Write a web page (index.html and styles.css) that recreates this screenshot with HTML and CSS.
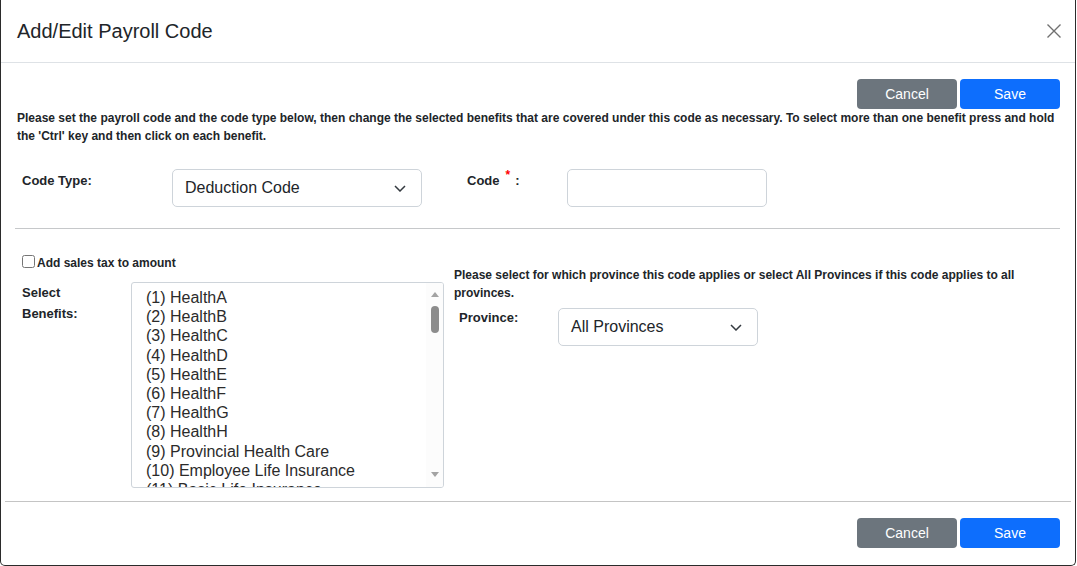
FILE: index.html
```html
<!DOCTYPE html>
<html lang="en">
<head>
<meta charset="utf-8">
<title>Add/Edit Payroll Code</title>
<link rel="stylesheet" href="styles.css">
</head>
<body>
<div class="modal">
  <header class="modal-header">
    <h1 class="modal-title">Add/Edit Payroll Code</h1>
    <button class="close" aria-label="Close">
      <svg width="14" height="14" viewBox="0 0 14 14"><path d="M0.5 0.5L13.5 13.5M13.5 0.5L0.5 13.5" stroke="#707070" stroke-width="1.4" fill="none"/></svg>
    </button>
  </header>
  <main class="modal-body">
    <div class="actions">
      <button class="btn btn-secondary">Cancel</button>
      <button class="btn btn-primary">Save</button>
    </div>
    <p class="intro">Please set the payroll code and the code type below, then change the selected benefits that are covered under this code as necessary. To select more than one benefit press and hold the 'Ctrl' key and then click on each benefit.</p>
    <div class="code-row">
      <label class="lbl lbl-type">Code Type:</label>
      <div class="select select-type">
        <span>Deduction Code</span>
        <svg class="chev" width="12" height="7" viewBox="0 0 12 7"><path d="M1 1L6 6L11 1" stroke="#343a40" stroke-width="1.5" fill="none"/></svg>
      </div>
      <label class="lbl lbl-code">Code<sup class="req">*</sup>:</label>
      <div class="input"></div>
    </div>
    <hr class="divider">
    <div class="lower">
      <div class="left">
        <label class="check"><input type="checkbox">Add sales tax to amount</label>
        <div class="benefits">
          <div class="lbl lbl-benefits">Select<br>Benefits:</div>
          <div class="listbox" role="listbox">
            <ul class="options">
              <li>(1) HealthA</li>
              <li>(2) HealthB</li>
              <li>(3) HealthC</li>
              <li>(4) HealthD</li>
              <li>(5) HealthE</li>
              <li>(6) HealthF</li>
              <li>(7) HealthG</li>
              <li>(8) HealthH</li>
              <li>(9) Provincial Health Care</li>
              <li>(10) Employee Life Insurance</li>
              <li>(11) Basic Life Insurance</li>
            </ul>
            <div class="scrollbar">
              <div class="arrow-up"><svg width="8" height="5" viewBox="0 0 8 5"><path d="M0 5L4 0L8 5Z" fill="#a3a3a3"/></svg></div>
              <div class="thumb"></div>
              <div class="track"></div>
              <div class="arrow-down"><svg width="8" height="5" viewBox="0 0 8 5"><path d="M0 0L4 5L8 0Z" fill="#a3a3a3"/></svg></div>
            </div>
          </div>
        </div>
      </div>
      <div class="right">
        <p class="note">Please select for which province this code applies or select All Provinces if this code applies to all provinces.</p>
        <div class="province-row">
          <label class="lbl lbl-province">Province:</label>
          <div class="select select-province">
            <span>All Provinces</span>
            <svg class="chev" width="12" height="7" viewBox="0 0 12 7"><path d="M1 1L6 6L11 1" stroke="#343a40" stroke-width="1.5" fill="none"/></svg>
          </div>
        </div>
      </div>
    </div>
  </main>
  <footer class="modal-footer">
    <button class="btn btn-secondary">Cancel</button>
    <button class="btn btn-primary">Save</button>
  </footer>
</div>
</body>
</html>
```
FILE: styles.css
```css
* { box-sizing: border-box; }

body {
  margin: 0;
  background: #ffffff;
  font-family: "Liberation Sans", Arial, sans-serif;
  color: #212529;
}

.modal {
  width: 1076px;
  height: 566px;
  border: 1px solid #2b2b2b;
  border-top: 0;
  border-radius: 0 0 5px 5px;
  background: #fff;
  display: flex;
  flex-direction: column;
}

.modal-header {
  display: flex;
  align-items: center;
  justify-content: space-between;
  padding: 16px 14px 16px 16px;
  border-bottom: 1px solid #dee2e6;
}

.modal-title {
  margin: 0;
  font-size: 20px;
  font-weight: 400;
  line-height: 30px;
  color: #212529;
}

.close {
  width: 14px;
  height: 14px;
  padding: 0;
  border: 0;
  background: none;
  display: flex;
}

.modal-body {
  flex: 1;
  padding: 16px 15px 0 16px;
}

.actions {
  display: flex;
  justify-content: flex-end;
  gap: 3px;
}

.btn {
  width: 100px;
  height: 30px;
  border: 0;
  border-radius: 4px;
  color: #fff;
  font-family: "Liberation Sans", Arial, sans-serif;
  font-size: 14px;
  padding: 0;
}

.btn-secondary { background: #6c757d; }
.btn-primary { background: #0d6efd; }

.intro {
  margin: 0;
  font-size: 12px;
  font-weight: 700;
  line-height: 18px;
}

.code-row {
  display: flex;
  align-items: flex-start;
  margin-top: 24px;
  padding-left: 5px;
}

.lbl {
  font-size: 13px;
  font-weight: 700;
  line-height: 20px;
}

.lbl-type {
  width: 150px;
  padding-top: 2px;
}

.select {
  height: 38px;
  border: 1px solid #ced4da;
  border-radius: 5px;
  display: flex;
  align-items: center;
  justify-content: space-between;
  padding: 0 15px 0 12px;
  font-size: 16px;
  color: #212529;
}

.select-type { width: 250px; }
.select-province { width: 200px; }

.lbl-code {
  width: 100px;
  margin-left: 45px;
  padding-top: 2px;
}

.req {
  color: #ff0000;
  font-size: 12px;
  vertical-align: 6px;
  line-height: 0;
  margin: 0 5px 0 6px;
}

.input {
  width: 200px;
  height: 38px;
  border: 1px solid #ced4da;
  border-radius: 5px;
}

.divider {
  margin: 21px 0 0 -2px;
  border: 0;
  border-top: 1px solid #c6c8ca;
  height: 0;
}

.lower {
  display: flex;
}

.left {
  width: 437px;
}

.check {
  display: flex;
  align-items: center;
  height: 18px;
  margin-top: 25px;
  font-size: 12px;
  font-weight: 700;
}

.check input {
  width: 13px;
  height: 13px;
  margin: 0 2px 3px 5px;
}

.benefits {
  display: flex;
  margin-top: 10px;
  padding-left: 5px;
}

.lbl-benefits {
  width: 109px;
  line-height: 21px;
}

.listbox {
  width: 313px;
  height: 206px;
  border: 1px solid #ced4da;
  border-radius: 3px;
  display: flex;
  overflow: hidden;
}

.options {
  flex: 1;
  list-style: none;
  margin: 0;
  padding: 5px 0 0 14px;
  overflow: hidden;
  font-size: 16px;
  line-height: 19.2px;
  color: #2b2b2b;
}

.options li { white-space: nowrap; }

.scrollbar {
  width: 17px;
  display: flex;
  flex-direction: column;
  align-items: center;
  background: #fcfcfc;
}

.arrow-up {
  height: 23px;
  padding-top: 9px;
  display: flex;
  align-items: flex-start;
}

.thumb {
  width: 8px;
  height: 27px;
  border-radius: 4px;
  background: #8c8c8c;
}

.track { flex: 1; }

.arrow-down {
  height: 15px;
  display: flex;
  align-items: flex-start;
}

.right {
  flex: 1;
}

.note {
  margin: 37px 0 0 0;
  font-size: 12px;
  font-weight: 700;
  line-height: 18px;
}

.province-row {
  display: flex;
  align-items: flex-start;
  margin-top: 6px;
  padding-left: 5px;
}

.lbl-province {
  width: 99px;
}

.modal-footer {
  margin: 0 4px;
  border-top: 1px solid #c4c4c4;
  padding: 16px 11px 17px;
  display: flex;
  justify-content: flex-end;
  gap: 3px;
}
```
